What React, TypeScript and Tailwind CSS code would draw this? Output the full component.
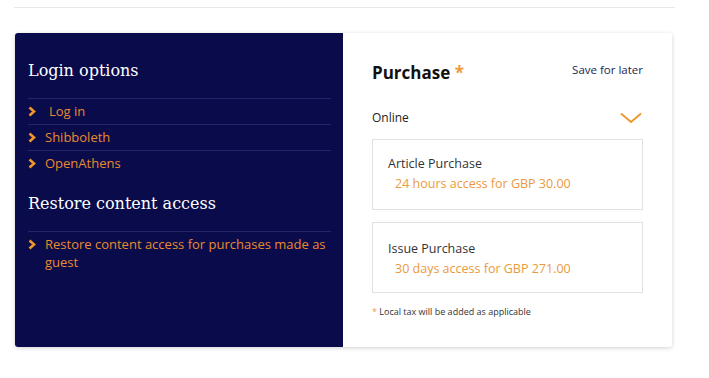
import type { ReactNode } from 'react';

const sans = { fontFamily: '"Open Sans", "Noto Sans", sans-serif' };
const serif = { fontFamily: '"DejaVu Serif", "Liberation Serif", serif' };

function Chevron() {
  return (
    <svg width="8" height="11" viewBox="0 0 8 11" className="shrink-0">
      <path d="M1.5 1.5 L6 5.5 L1.5 9.5" fill="none" stroke="#f0962c" strokeWidth="2.6" />
    </svg>
  );
}

function LinkRow({ children, extra }: { children: ReactNode; extra?: string }) {
  return (
    <div className="flex items-start gap-[9px] border-t border-[#23246a] pt-[3px] pb-[4px] text-[13px] leading-[18px] text-[#e98a2e]">
      <span className="mt-[4px]">
        <Chevron />
      </span>
      <span className={extra}>{children}</span>
    </div>
  );
}

function Option({ title, price, top }: { title: string; price: string; top: string }) {
  return (
    <div className={`border border-[#e2e2e2] h-[71px] pl-[15px] ${top}`}>
      <div className="text-[12.5px] leading-[18px] text-[#333]">{title}</div>
      <div className="mt-[2px] pl-[7px] text-[12.5px] leading-[18px] text-[#eb9a3c]">{price}</div>
    </div>
  );
}

export default function App() {
  return (
    <div className="w-[709px] h-[378px] bg-white" style={sans}>
      <div className="px-[14px] pt-[7px]">
        <div className="w-[661px] border-t border-[#e8e8e8]" />
      </div>

      <div className="ml-[15px] mt-[25px] flex h-[314px] w-[657px] rounded-[3px] shadow-[0_1px_4px_rgba(0,0,0,0.18)] overflow-hidden">
        <div className="w-[328px] bg-[#0a0b4b] pl-[13px] pr-[12px] pt-[26px]">
          <h2 className="text-[16px] leading-[24px] text-white" style={serif}>
            Login options
          </h2>
          <div className="mt-[15px]">
            <LinkRow extra="ml-[4px]">Log in</LinkRow>
            <LinkRow>Shibboleth</LinkRow>
            <LinkRow>OpenAthens</LinkRow>
          </div>
          <h2 className="mt-[16px] text-[16px] leading-[24px] text-white" style={serif}>
            Restore content access
          </h2>
          <div className="mt-[15px]">
            <div className="flex items-start gap-[9px] border-t border-[#23246a] pt-[3px] text-[13px] leading-[18px] text-[#e98a2e]">
              <span className="mt-[4px]">
                <Chevron />
              </span>
              <span>Restore content access for purchases made as guest</span>
            </div>
          </div>
        </div>

        <div className="flex-1 bg-white pl-[29px] pr-[29px] pt-[27px]">
          <div className="flex items-start justify-between">
            <div className="text-[17px] font-bold leading-[26px] text-[#111]">
              Purchase <span className="text-[#eb9a3c]">*</span>
            </div>
            <div className="pt-[1px] text-[11.5px] leading-[18px] text-[#23264f]">Save for later</div>
          </div>
          <div className="mt-[23px] flex items-center justify-between">
            <span className="text-[12px] font-medium leading-[18px] text-[#222]">Online</span>
            <svg width="22" height="12" viewBox="0 0 22 12" className="mr-[1px]">
              <path d="M1 1.5 L11 10 L21 1.5" fill="none" stroke="#f0962c" strokeWidth="1.8" />
            </svg>
          </div>
          <Option top="mt-[12px] pt-[15px]" title="Article Purchase" price="24 hours access for GBP 30.00" />
          <Option top="mt-[12px] pt-[17px]" title="Issue Purchase" price="30 days access for GBP 271.00" />
          <div className="mt-[12px] text-[9px] leading-[14px] text-[#333]">
            <span className="text-[#eb9a3c]">*</span> Local tax will be added as applicable
          </div>
        </div>
      </div>
    </div>
  );
}
